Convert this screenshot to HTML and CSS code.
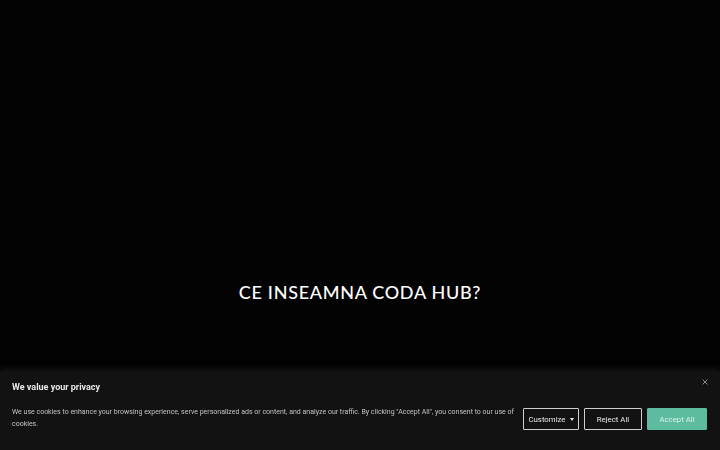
FILE: index.html
```html
<!DOCTYPE html>
<html lang="ro">
<head>
<meta charset="utf-8">
<title>Coda Hub</title>
<link rel="stylesheet" href="styles.css">
</head>
<body>
<main class="hero">
  <h2 class="hero-title">CE INSEAMNA CODA HUB?</h2>
</main>
<div class="cookie">
  <div class="cookie-head">
    <p class="cookie-title">We value your privacy</p>
    <button class="cookie-close" aria-label="Close">
      <svg width="6" height="6" viewBox="0 0 6 6"><path d="M0.5 0.5L5.5 5.5M5.5 0.5L0.5 5.5" stroke="#8a8a8a" stroke-width="1"/></svg>
    </button>
  </div>
  <div class="cookie-body">
    <p class="cookie-text">We use cookies to enhance your browsing experience, serve personalized ads or content, and analyze our traffic. By clicking "Accept All", you consent to our use of cookies.</p>
    <div class="cookie-actions">
      <button class="btn btn-outline">Customize <span class="caret"></span></button>
      <button class="btn btn-outline btn-reject">Reject All</button>
      <button class="btn btn-accept">Accept All</button>
    </div>
  </div>
</div>
</body>
</html>
```
FILE: styles.css
```css
html, body {
  margin: 0;
  padding: 0;
  background: #030303;
  height: 450px;
  overflow: hidden;
}
.hero {
  height: 450px;
  display: flex;
  flex-direction: column;
  align-items: center;
}
.hero-title {
  margin: 281px 0 0;
  font-family: "Lato", "DejaVu Sans", sans-serif;
  font-weight: 500;
  font-size: 18px;
  letter-spacing: 0.7px;
  color: #ffffff;
  line-height: 22px;
}
.cookie {
  position: fixed;
  left: 0;
  right: 0;
  bottom: 0;
  height: 79px;
  box-sizing: border-box;
  background: #121212;
  box-shadow: 0 -2px 6px rgba(40, 40, 40, 0.5);
  padding: 9px 13px 0 12px;
  font-family: "Roboto", "Liberation Sans", sans-serif;
}
.cookie-head {
  display: flex;
  justify-content: space-between;
  align-items: flex-start;
}
.cookie-title {
  margin: 0;
  font-size: 9px;
  font-weight: 700;
  line-height: 14px;
  color: #e8e8e8;
}
.cookie-close {
  background: none;
  border: 0;
  padding: 0;
  margin: -1px -1px 0 0;
  line-height: 0;
  cursor: pointer;
}
.cookie-body {
  display: flex;
  align-items: flex-start;
  gap: 7px;
  margin-top: 11px;
}
.cookie-text {
  margin: 1px 0 0;
  flex: 1;
  font-size: 7px;
  line-height: 12px;
  color: #c2c2c2;
}
.cookie-actions {
  display: flex;
  gap: 5px;
  margin-top: 3px;
}
.btn {
  height: 22px;
  box-sizing: border-box;
  font-family: "Roboto", "Liberation Sans", sans-serif;
  font-size: 7.8px;
  padding: 0;
  border-radius: 1px;
  cursor: pointer;
  display: flex;
  align-items: center;
  justify-content: center;
  gap: 4px;
}
.btn-outline {
  background: transparent;
  border: 1.5px solid #cfcfcf;
  color: #e6e6e6;
  width: 56px;
}
.btn-reject {
  width: 58px;
}
.btn-accept {
  width: 60px;
  background: #5dbc9f;
  border: 1.5px solid #5dbc9f;
  color: #d9f1e9;
}
.caret {
  width: 0;
  height: 0;
  border-left: 2.5px solid transparent;
  border-right: 2.5px solid transparent;
  border-top: 3px solid #e6e6e6;
}
```
